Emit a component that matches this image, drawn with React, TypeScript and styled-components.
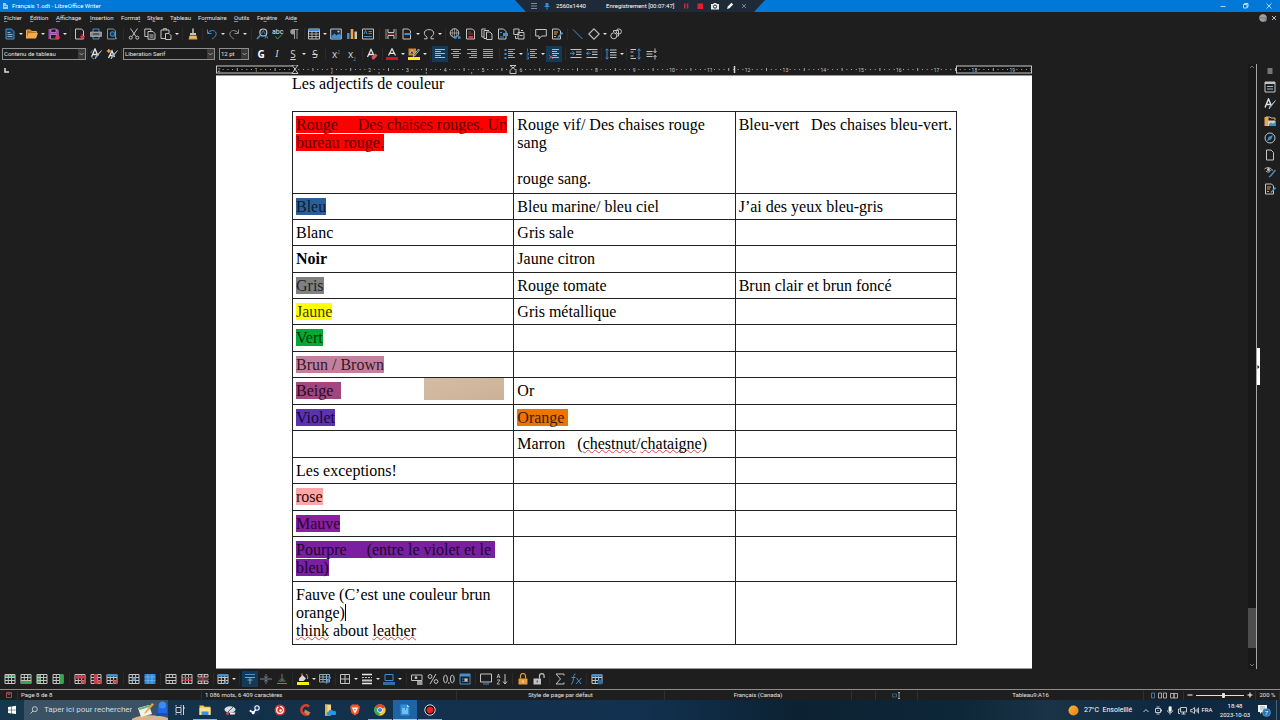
import React from "react";
import styled, { createGlobalStyle, css } from "styled-components";

const GlobalStyle = createGlobalStyle`
  *, *::before, *::after { box-sizing: border-box; }
  body { margin: 0; background: #1e1e1e; }
  button, select, input { font: inherit; color: inherit; margin: 0; }
`;

const UI = `Roboto, "Open Sans", sans-serif`;
const G = "#c4c4c4";
const B = "#3f8fd2";
const O = "#eaa455";
const R = "#cc3f4a";
const N = "#35a552";

/* ---------- icons (12 x 12 grid) ---------- */

const grid = (
  <path d="M1 1.5h10v9H1zM1 4.5h10M1 7.5h10M4.3 1.5v9M7.6 1.5v9" stroke={G} fill="none" />
);
const page = <path d="M2.5 1h4.5l2.5 2.5v7.5h-7z" stroke={G} fill="none" />;
const lines = (x1: number[], x2: number[], c = G) => (
  <path d={x1.map((x, i) => `M${x} ${1.5 + i * 2}H${x2[i]}`).join("")} stroke={c} fill="none" />
);
const pen = <path d="M11.500 2.500L7 8.500L5 11L6 8Z" fill={B} stroke={G} strokeWidth=".7" />;

const icons: Record<string, React.ReactNode> = {
  newDoc: <><path d="M2 1h5.5l2.5 2.5v7.5H2z" fill="#17405f" stroke={B} /><path d="M3.5 4.5h3M3.5 6.5h5M3.5 8.5h5" stroke={G} strokeWidth=".8" /></>,
  open: <><path d="M.5 10.500V2h4l1 1.500h5v2" fill="#b87522" stroke={O} /><path d="M.5 10.500L2.500 5h9.500l-2 5.500z" fill="#f5a94e" /></>,
  save: <><path d="M.5 1h9l1.500 1.500v8.500H.5z" fill="#a344b3" /><path d="M3 1h5v3.500H3zM2.500 6.500h6V11h-6z" fill="#1e1e1e" stroke="#d9a5e2" strokeWidth=".6" /><circle cx="9.500" cy="9.500" r="2.300" fill="#e8354a" /></>,
  pdf: <><path d="M1.500 1h6l2 2v8h-8z" fill="none" stroke={G} /><path d="M8 6v3M6.500 8.500L8.500 11l2-2.500z" fill={R} stroke={R} /></>,
  print: <><path d="M3 4V1h6v3M3 8v3h6V8" fill="none" stroke={B} /><path d="M.5 4h11v4.500h-11z" fill="#8b8b8b" stroke={G} strokeWidth=".6" /><path d="M3 6h6" stroke="#222" /></>,
  preview: <><path d="M1.500 1h6l2 2v8h-8z" fill="none" stroke="#7e95a6" /><circle cx="6.500" cy="6" r="2.300" fill="#17405f" stroke={B} /><path d="M8.500 8l2.500 3" stroke={B} /></>,
  cut: <><path d="M2.500 .5L8 8.500M9.500 .5L4 8.500" stroke={G} fill="none" /><circle cx="2.700" cy="9.700" r="1.500" stroke={G} fill="none" /><circle cx="9.300" cy="9.700" r="1.500" stroke={G} fill="none" /></>,
  copy: <path d="M4 8.500H.8V1h6v2M4 3.500h5l2 2v5.700H4zM5.500 7h4M5.500 9h4" stroke={G} fill="none" />,
  paste: <><path d="M5 10.500H1V2h8v3M3.500 2V.7h3V2" stroke={G} fill="none" /><path d="M5.500 5.500h3.500l2 2v4H5.500z" stroke={G} fill="none" /></>,
  brush: <><path d="M6 .5v4.500" stroke={G} strokeWidth="1.500" /><path d="M3 5h6v2H3z" fill={G} /><path d="M2.500 7.500h7l1 4h-9z" fill="#dba63f" /><path d="M3 9h6" stroke="#fff" strokeWidth=".5" /></>,
  undo: <path d="M1.500 1.500v4h4M2 5C4 2 9 1.500 10 5c.7 2.500-1.500 4.500-4 6" stroke={B} fill="none" />,
  redo: <path d="M10.500 1.500v4h-4M10 5C8 2 3 1.500 2 5c-.7 2.500 1.500 4.500 4 6" stroke="#8a8a8a" fill="none" />,
  find: <><circle cx="7.300" cy="4.500" r="3.500" stroke={G} fill="none" strokeWidth="1.200" /><path d="M4.500 7L1 11" stroke={B} strokeWidth="1.600" /><path d="M9 10.500L10.300 7l1.300 3.500" stroke={B} fill="none" /><path d="M5.500 6l1.800-3.500L9 6" stroke={B} fill="none" strokeWidth=".8" /></>,
  spell: <><text x="0" y="6" fontSize="7" fill="#e4e4e4" fontFamily="Roboto">abc</text><path d="M3.500 8.500l2 2.500 4.500-4.500" stroke={N} fill="none" /></>,
  pilcrow: <><path d="M6.500 1H5a2.700 2.700 0 0 0 0 5.500h1.500z" fill="#9a9a9a" /><path d="M6.500 11V1.500M9 11V1.500M5 1.500h5.500" stroke="#9a9a9a" fill="none" /></>,
  table: <><path d="M.5 1h11v10H.5z" fill="none" stroke={G} /><path d="M.5 1h11v2.500H.5z" fill={B} /><path d="M.5 3.500h11M.5 6h11M.5 8.500h11M4 3.500V11M8 3.500V11" stroke={G} strokeWidth=".8" /></>,
  image: <><path d="M.7 1h10.600v10H.7z" fill="#1d2b38" stroke={G} /><path d="M1.500 10.500V8l3-2.500 2 2L9 5.500l2 2v3z" fill={B} /><circle cx="8.500" cy="3.500" r="1.100" fill={G} /></>,
  chart: <><path d="M1 5h2.500v6H1z" fill={B} /><path d="M4.700 1h2.600v10H4.700z" fill={O} /><path d="M8.500 3.500H11V11H8.500z" fill="#d7c7a3" /></>,
  textbox: <><path d="M.5 1h11v10H.5z" fill="none" stroke={G} /><path d="M2 6L3.500 2.500 5 6M6.500 3.500h3.500M6.500 5.500h3.500M2 8.500h8" stroke={B} fill="none" /></>,
  pageBreak: <><path d="M3 1v3.500h6V1M3 11V7.500h6V11" stroke={G} fill="none" /><path d="M1 1v10M11 1v10" stroke={G} strokeWidth=".7" /><path d="M0 6h12" stroke={R} strokeWidth=".8" /></>,
  field: <><path d="M2 1h5.500l2 2v8H2z" fill="none" stroke={G} /><path d="M3.500 6h6.500" stroke={B} strokeWidth="2" /></>,
  omega: <path d="M1 10.800h3V9C1.500 7.500 1 5.500 1.500 4 2.500.8 9.500.8 10.500 4c.5 1.500 0 3.500-2.500 5v1.800h3" stroke={G} fill="none" />,
  link: <><circle cx="5.500" cy="5" r="4.300" stroke={G} fill="none" /><path d="M1.200 5h8.600M5.500.7v8.600M3.300 1.500v7M7.700 1.500v7" stroke={G} strokeWidth=".6" /><path d="M5 9.500h2.500M9 9.500h2.500" stroke={B} strokeWidth="2.400" /></>,
  footnote: <><path d="M1.500 1h6l2 2v8h-8z" fill="none" stroke={G} /><path d="M3.500 8h4.500v2.500H3.500z" fill={R} /><path d="M3 4h3M3 6h5" stroke={R} strokeWidth=".7" /></>,
  endnote: <path d="M3 9H.8V1h4M5 10.500H3V2.500h5M5.500 4h3.500l2 2v5.500H5.500z" stroke={G} fill="none" />,
  bookmark: <><path d="M1.500 1h5l2.500 2.500V11h-7.500z" fill="none" stroke={G} /><path d="M6 5h5v3H6z" fill={B} /><path d="M3 4.500h2M3 9h4" stroke={B} /></>,
  crossRef: <path d="M.8 1H6v5.500H.8zM5 4.500h6v6.500H5zM2.500 8v2.500h2M6.500 7.500h3M8 2.500h2" stroke={G} fill="none" />,
  comment: <path d="M.7 1.500h10.600v6.500H6.500L4 11V8H.7z" stroke={G} fill="none" />,
  track: <><path d="M1.500 1h6l2 2v8h-8z" fill="none" stroke={G} /><path d="M3 4h4M3 6h3M3 8.500h2" stroke={O} /><path d="M11.500 4.500L7 9.500" stroke={B} strokeWidth="1.700" /></>,
  line: <path d="M1 1.500l9.500 9.500" stroke={B} />,
  diamond: <path d="M6 .8L11.200 6 6 11.200.8 6z" stroke={G} fill="none" strokeWidth="1.100" />,
  shapes: <><circle cx="3.800" cy="7.800" r="3" stroke={G} fill="none" /><path d="M3.500 4V2.500h5V8H7" stroke={G} fill="none" /><circle cx="8.800" cy="3.500" r="2.600" stroke={G} fill="none" /></>,
  styleEdit: <><path d="M1.500 9L5 1l3 7M2.800 6.500h4" stroke="#e2e2e2" strokeWidth="1.400" fill="none" />{pen}<path d="M.8 5a4 4 0 0 1 2-3M1 8a4 4 0 0 0 3 3" stroke={B} fill="none" /></>,
  styles: <><path d="M1 9.500L4.500 1l3 7M2.300 6.500h4" stroke="#e2e2e2" strokeWidth="1.400" fill="none" />{pen}</>,
  styleNew: <><path d="M2.500 10L6 3l2.500 6M3.800 7.500h4" stroke="#e2e2e2" strokeWidth="1.400" fill="none" />{pen}<path d="M.8 3h4M2.800 1v4" stroke={O} strokeWidth="1.300" /></>,
  clear: <><path d="M1.500 9L5 1.500l3 6M2.800 6.500h4" stroke="#e2e2e2" strokeWidth="1.300" fill="none" /><path d="M5.500 9l4-3.500 2 2-3.500 4h-1.500z" fill="#df5761" /></>,
  fontColor: <><path d="M2.500 7.500L6 .8l3.500 6.700M3.800 5.300h4.400" stroke="#e8e8e8" strokeWidth="1.200" fill="none" /><path d="M0 9h12v3H0z" fill="#d3141e" /></>,
  highlight: <><path d="M.5.500h7.500v7H.5z" fill="#cf8a2c" /><path d="M2 5.500L4 2l2 3.500M10.500 1L6 6.500l-1 2 2-1L11.500 2z" fill="#3a3a3a" stroke="#ddd" strokeWidth=".7" /><path d="M0 9h12v3H0z" fill="#ffef00" /></>,
  alignLeft: lines([1, 1, 1, 1, 1], [11, 7, 11, 7, 11], "#9bc0dc"),
  alignCenter: lines([1, 3, 1, 3, 3], [11, 9, 11, 9, 9], "#a4a4a4"),
  alignRight: lines([1, 5, 1, 5, 3], [11, 11, 11, 11, 11], "#a4a4a4"),
  justify: lines([1, 1, 1, 1, 1], [11, 11, 11, 11, 11], "#a4a4a4"),
  bullets: <>{lines([4, 4, 4, 4, 4], [11, 9, 11, 9, 11], "#a4a4a4")}<path d="M.5 1h2v2h-2zM.5 5h2v2h-2zM.5 9h2v2h-2z" fill={B} /></>,
  numbers: <>{lines([4, 4, 4, 4, 4], [11, 9, 11, 9, 11], "#a4a4a4")}<path d="M1.500 .5v3M.5 5h2v2h-2M.5 9h2v2h-2" stroke={B} fill="none" strokeWidth=".8" /></>,
  noList: <>{lines([4, 4, 4, 4, 4], [11, 9, 11, 9, 11], "#9bc0dc")}<path d="M1 7l4 4M5 7l-4 4" stroke={R} /></>,
  indent: <><path d="M.5 1.500h11M6 4h5.500M6 6.500h5.500M.5 9.500h11" stroke={G} /><path d="M0 5.300h4M2.500 3.500l2 1.800-2 1.800" stroke={B} fill="none" /></>,
  outdent: <><path d="M.5 1.500h11M6 4h5.500M6 6.500h5.500M.5 9.500h11" stroke={G} /><path d="M.5 5.300h4M2.500 3.500l-2 1.800 2 1.800" stroke={B} fill="none" /></>,
  lineSpacing: <><path d="M5 2h6.500M5 4.500h6.500M5 7h6.500M5 9.500h6.500" stroke={G} /><path d="M2 1v10M.5 2.500L2 .8l1.500 1.700M.5 9.500L2 11.200l1.500-1.700" stroke={B} fill="none" /></>,
  paraUp: <><path d="M.5 1.500h5.500M.5 10.500h5.500M.5 4h3M.5 8h3" stroke={G} /><path d="M9 1v10M7.500 2.500L9 .8l1.500 1.700M7.500 9.500L9 11.200l1.500-1.700" stroke={B} fill="none" /></>,
  paraDown: <><path d="M.5 3.500h6M.5 6h6M.5 8.500h6" stroke={G} /><path d="M9 .5v4M7.500 3l1.500 1.700L10.500 3M9 11.500v-4M7.500 9L9 7.300 10.500 9" stroke={G} fill="none" /></>,
  rowAbove: <><path d="M1 1h10v3H1z" fill={N} />{grid}</>,
  rowBelow: <>{grid}<path d="M1 8h10v3H1z" fill={N} /><path d="M9 2v4" stroke={N} /></>,
  colBefore: <><path d="M1 1h3.300v10H1z" fill={N} />{grid}</>,
  colAfter: <>{grid}<path d="M7.700 1H11v10H7.700z" fill={N} /></>,
  delRow: <>{grid}<path d="M1 2.500h10v3H1z" fill={R} /><path d="M7 7l4 4M11 7l-4 4" stroke={R} strokeWidth="1.300" /></>,
  delCol: <>{grid}<path d="M4 1h3.500v10H4z" fill={R} /><path d="M7 7l4 4M11 7l-4 4" stroke={R} strokeWidth="1.300" /></>,
  delTable: <>{grid}<path d="M1 1h10v2.500H1z" fill={B} /><path d="M7 7l4 4M11 7l-4 4" stroke={R} strokeWidth="1.300" /></>,
  selCell: <>{grid}<path d="M4.300 4.500h3.300v3H4.300z" fill={B} /></>,
  selTable: <><path d="M.5 1h11v10H.5z" fill="#2f8ade" /><path d="M.5 4h11M.5 7.500h11M4 1v10M8 1v10" stroke="#7dbcf0" strokeWidth=".6" /></>,
  merge: <path d="M1 1.500h10v9H1zM1 4.500h10M1 7.500h10M4.300 1.500v3M7.600 1.500v3M4.300 7.500v3M7.600 7.500v3" stroke={G} fill="none" />,
  split: <>{grid}<path d="M2 4.500h8v3H2zM6 4.500v3" stroke={R} fill="none" /></>,
  splitTable: <><path d="M1 1.500h10v2.500H1zM1 8h10v2.500H1zM4.300 1.500V4M7.600 1.500V4M4.300 8v2.500M7.600 8v2.500" stroke={G} fill="none" /><path d="M0 6h12M6 1v10" stroke={R} /></>,
  optimize: <>{grid}<path d="M1 1h10v2.500H1z" fill={B} /><path d="M8.500 5v6M6.500 9l2 2 2-2" stroke={B} fill="none" /></>,
  vTop: <><path d="M1 1.500h10" stroke={B} /><path d="M1 4.500h10M3.500 7h5M6 5v6" stroke="#86a4b8" /></>,
  vMid: <><path d="M0 6h12" stroke="#6b8ba0" /><path d="M4 3.500l2 1.500 2-1.500M4 8.500L6 7l2 1.500M6 1v3.500M6 7.500V11" stroke="#8a8a8a" strokeWidth=".8" fill="none" /></>,
  vBot: <><path d="M1 10.500h10" stroke={N} /><path d="M2.500 8h7M4 5.500l2 2 2-2M6 1v6" stroke="#8a8a8a" strokeWidth=".8" fill="none" /></>,
  bucket: <><path d="M2 5.500L5.500 2l3.500 3.500L6.500 8H2z" fill="#d8d8d8" /><path d="M5 .5v3M9.500 1c1 2 1.500 3 1 5" stroke={O} fill="none" /><path d="M0 9h12v3H0z" fill="#ffef00" /></>,
  autoFormat: <><path d="M.5 1.500h10v7.500H.5zM.5 4h10M.5 6.500h10M4 1.500V9M7.500 1.500V9" stroke="#8ba9bd" fill="none" /><path d="M11.500 4L7 10.500" stroke={B} strokeWidth="1.700" /></>,
  borders: <path d="M1.500 1.500h9v9h-9zM1.500 6h9M6 1.500v9" stroke={G} fill="none" />,
  borderStyle: <><path d="M1 1.500h10M1 10.500h10" stroke="#e8e8e8" strokeWidth="1.500" /><path d="M1 4.500h10" stroke={G} strokeWidth="1" strokeDasharray="2 1" /><path d="M1 7.500h10" stroke={G} strokeWidth="2" /></>,
  borderColor: <><path d="M2 1.500h8v6H2z" stroke={B} fill="none" /><path d="M0 9h12v3H0z" fill="#2f6ea9" /></>,
  currency: <><path d="M.5 2h10.500v5.500H.5z" stroke={G} fill="none" /><circle cx="5" cy="4.700" r="1.400" fill={G} /><path d="M6 9h5.500M6 11h5.500" stroke={G} strokeWidth="1.400" /></>,
  percent: <><circle cx="3" cy="3.500" r="1.900" stroke={G} fill="none" /><circle cx="9" cy="8.500" r="1.900" stroke={G} fill="none" /><path d="M9 1L3 11" stroke={G} /></>,
  decimal: <><ellipse cx="2.500" cy="6" rx="1.900" ry="3.800" stroke={G} fill="none" /><ellipse cx="9.300" cy="6" rx="1.900" ry="3.800" stroke={G} fill="none" /><path d="M5.900 9v2" stroke={G} /></>,
  date: <><path d="M1 1h10v10H1z" stroke={B} fill="none" /><path d="M1 1h10v2.500H1z" fill={B} /><path d="M3 6h6M3 8.500h6" stroke={B} strokeDasharray="1.500 .8" /><path d="M5.500 5.500h3v3h-3z" fill={G} /></>,
  caption: <><path d="M.5 1h11v8H.5z" stroke={G} fill="none" /><path d="M3 11h6" stroke={B} /></>,
  sort: <><path d="M1 5l1.500-4L4 5M1.500 3.800h2M1 7h3L1 11h3" stroke={G} fill="none" strokeWidth=".8" /><path d="M9 1v10M7 8.500L9 11l2-2.500" stroke={G} fill="none" /></>,
  lock: <><path d="M1.500 5.500h9v6h-9z" fill="#e79a3c" /><path d="M3.500 5.500V3a2.500 2.500 0 0 1 5 0v2.500" stroke="#e79a3c" fill="none" strokeWidth="1.200" /><path d="M6 7.500v2" stroke="#fff" /></>,
  unlock: <><path d="M.5 5.500h7.500v6H.5z" fill={G} /><path d="M6.500 5.500V3a2.300 2.300 0 0 1 4.600 0v2" stroke={G} fill="none" strokeWidth="1.200" /><path d="M4.200 7.500v2" stroke="#333" /></>,
  sum: <path d="M10 2.500V1H2l4.500 5L2 11h8V9.500" stroke={G} fill="none" />,
  fx: <path d="M5.500 1C3.500.7 4 3 3.500 5.500S2.800 11 1 11M1.500 4.500h4M6.500 5l4.500 6M11.500 5L6 11" stroke={B} fill="none" />,
  tableProps: <>{grid}<path d="M1 1h10v2.500H1z" fill={B} /><circle cx="9" cy="9" r="2.500" fill="#2b6fa8" /></>,
  hamburger: <path d="M3.500 4h5M3.500 6h5M3.500 8h5" stroke="#cfcfcf" />,
  properties: <><path d="M1 1h10v10H1z" stroke={G} fill="none" /><path d="M1 1h10v2H1z" fill={G} /><path d="M3 5.500h6M3 8h6" stroke="#9fbace" /></>,
  gallery: <><path d="M.5 2h4v9h-4z" fill={O} /><path d="M2 2h4l1 1h4v2" stroke="#e7b36f" fill="none" /><path d="M4 5.500h7.500V11H4z" fill="#d9d3c4" /><path d="M5 11V9l2-1.500 2 1L11.500 7v4z" fill={B} /></>,
  compass: <><circle cx="6" cy="6" r="5" stroke={G} fill="none" /><path d="M9 3L7.300 7.300 3 9l1.700-4.300z" fill={B} /></>,
  page,
  inspector: <><path d="M.5 3c3-2.500 7-1 8 1.500M2 5c2 2 4 1 5-1" stroke={G} fill="none" /><circle cx="4.500" cy="3.500" r="1.500" fill={G} /><path d="M11.500 4L7 9.500 5 11" stroke={B} fill="none" strokeWidth="1.500" /></>,
};

const Svg = ({ name, size = 12 }: { name: string; size?: number }) => (
  <svg width={size} height={size} viewBox="0 0 12 12" aria-hidden="true">{icons[name]}</svg>
);

/* ---------- shell ---------- */

const Shell = styled.div`
  display: flex;
  flex-direction: column;
  min-height: 100vh;
  background: #1e1e1e;
  color: #e4e4e4;
  font: 6px/8px ${UI};
`;

const TitleBar = styled.header`
  position: relative;
  display: flex;
  align-items: center;
  justify-content: space-between;
  height: 12px;
  padding-left: 2px;
  background: #0078d7;
  color: #fff;
`;

const Title = styled.div`
  display: flex;
  align-items: center;
  gap: 3px;
  white-space: nowrap;
`;

const WindowControls = styled.div`
  display: flex;
`;

const BareButton = styled.button`
  display: flex;
  align-items: center;
  justify-content: center;
  padding: 0;
  border: 0;
  background: none;
`;

const WindowButton = styled(BareButton)`
  width: 23px;
  height: 11px;
`;

const Recorder = styled.div`
  position: absolute;
  top: 0;
  left: 50%;
  transform: translateX(-50%);
  display: flex;
  align-items: center;
  gap: 6px;
  width: 250px;
  height: 12px;
  padding-left: 15px;
  background: #1f2a38;
  clip-path: polygon(0 0, 100% 0, calc(100% - 11px) 100%, 11px 100%);
`;

const RecText = styled.span<{ $w: number }>`
  width: ${(p) => p.$w}px;
  white-space: nowrap;
`;

const MenuBar = styled.nav`
  display: flex;
  align-items: center;
  height: 12px;
  padding-left: 4px;
`;

const MenuItem = styled.button<{ $w: number }>`
  width: ${(p) => p.$w}px;
  padding: 0;
  border: 0;
  background: none;
  text-align: left;
  white-space: nowrap;
  u { text-underline-offset: 1px; text-decoration-thickness: 1px; text-decoration-color: #8a8a8a; }
`;

const MenuEnd = styled.div`
  display: flex;
  gap: 4px;
  margin-left: auto;
  padding-right: 3px;
`;

const ToolRow = styled.div`
  display: flex;
  align-items: center;
  height: 20px;
  padding-left: 2px;
`;

const Tool = styled(BareButton)<{ $on?: boolean }>`
  width: 16px;
  height: 16px;
  ${(p) => p.$on && css`background: #143a58;`}
`;

const GlyphTool = styled(Tool)<{ $kind?: "bold" | "italic" | "under" | "strike" }>`
  font-family: "Open Sans", sans-serif;
  font-size: 10px;
  line-height: 12px;
  color: #d4d4d4;
  ${(p) => p.$kind === "bold" && css`font-weight: 700; color: #fff;`}
  ${(p) => p.$kind === "italic" && css`font-style: italic; font-family: "Liberation Serif", serif;`}
  ${(p) => p.$kind === "under" && css`text-decoration: underline;`}
  ${(p) => p.$kind === "strike" && css`text-decoration: line-through;`}
  sup, sub { font-size: 5px; line-height: 0; color: ${B}; }
`;

const CaretButton = styled(BareButton)`
  width: 6px;
  height: 16px;
  &::after {
    content: "";
    border: 2px solid transparent;
    border-top-color: #e4e4e4;
    border-bottom: 0;
  }
`;

const Gap = styled.span<{ $w: number }>`
  display: flex;
  justify-content: center;
  width: ${(p) => p.$w}px;
  height: 12px;
  &::after { content: ""; width: 1px; background: #2a2a2a; }
`;

const ComboBox = styled.label<{ $w: number }>`
  position: relative;
  display: flex;
  width: ${(p) => p.$w}px;
  height: 12px;
  select {
    appearance: none;
    width: 100%;
    padding: 0 10px 0 1px;
    border: 1px solid #8f8f8f;
    border-radius: 0;
    background: #1c1c1c;
  }
  svg {
    position: absolute;
    top: 1px;
    right: 1px;
    background: #3a3a3a;
    pointer-events: none;
  }
`;

const Combo = ({ w, value, label }: { w: number; value: string; label: string }) => (
  <ComboBox $w={w}>
    <select aria-label={label} defaultValue={value}><option>{value}</option></select>
    <svg width="7" height="10" viewBox="0 0 7 10" aria-hidden="true">
      <path d="M1.500 4l2 2 2-2" stroke="#b5b5b5" fill="none" strokeWidth=".8" />
    </svg>
  </ComboBox>
);

/* A tool list: names are icons, "v" is a drop-down caret, numbers are separators, "*" marks a pressed button. */
const Tools = ({ items }: { items: (string | number)[] }) => (
  <>
    {items.map((it, i) => {
      if (typeof it === "number") return <Gap key={i} $w={it} />;
      if (it === "v") return <CaretButton key={i} aria-label="Plus d'options" />;
      const on = it.endsWith("*");
      const name = on ? it.slice(0, -1) : it;
      return <Tool key={i} $on={on} aria-label={name}><Svg name={name} /></Tool>;
    })}
  </>
);

/* ---------- workspace ---------- */

const Workspace = styled.main`
  display: flex;
  flex: 1;
`;

const Canvas = styled.div`
  position: relative;
  display: flex;
  flex-direction: column;
  align-items: center;
  flex: 1;
  min-width: 0;
`;

const TabCorner = styled.svg`
  position: absolute;
  top: 4px;
  left: 4px;
`;

const RulerSvg = styled.svg`
  display: block;
  margin: 1px 0;
`;

const Sheet = styled.article`
  flex: 1;
  width: 816px;
  padding: 0 75px 23px 76px;
  border-top: 1px solid #9a9a9a;
  border-bottom: 1px solid #9a9a9a;
  background: #fff;
  color: #000;
  font: 16px/18px "Liberation Serif", serif;
`;

const Heading = styled.p`
  margin: 0 0 20px;
  line-height: 15px;
`;

const DocTable = styled.table`
  width: 665px;
  border-collapse: collapse;
  table-layout: fixed;
`;

const Row = styled.tr<{ $h: number }>`
  height: ${(p) => p.$h}px;
`;

const Cell = styled.td`
  position: relative;
  padding: 4px 0 3px 3px;
  border: 1px solid #222;
  vertical-align: top;
  white-space: pre;
`;

const Mark = styled.span<{ $bg: string; $fg?: string }>`
  background: ${(p) => p.$bg};
  color: ${(p) => p.$fg ?? "#111"};
`;

const Misspelt = styled.span`
  text-decoration: underline wavy #e0473f 1px;
  text-underline-offset: 0;
  text-decoration-skip-ink: none;
`;

const TextCursor = styled.span`
  border-right: 1px solid #000;
`;

const Swatch = styled.div`
  position: absolute;
  top: 0;
  right: 9px;
  width: 80px;
  height: 22px;
  background: linear-gradient(165deg, #d4bda5, #cbb196);
`;

const Scrollbar = styled.div`
  display: flex;
  flex-direction: column;
  align-items: center;
  justify-content: space-between;
  width: 8px;
  background: #181818;
`;

const Thumb = styled.div`
  width: 8px;
  height: 40px;
  margin: auto 0 13px;
  background: #4d4d4d;
`;

const Splitter = styled.div`
  display: flex;
  align-items: center;
  width: 4px;
  border-left: 1px solid #a6a6a6;
`;

const SplitHandle = styled(BareButton)`
  width: 3px;
  height: 37px;
  background: #fff;
`;

const SideBar = styled.aside`
  display: flex;
  flex-direction: column;
  align-items: center;
  width: 20px;
`;

const SideButton = styled(BareButton)<{ $h: number }>`
  width: 16px;
  height: ${(p) => p.$h}px;
`;

const CM = 37.8;
const Ruler = () => {
  const zero = 78;
  const marks = Array.from({ length: 22 }, (_, i) => i - 2);
  return (
    <RulerSvg width="816" height="9" viewBox="0 0 816 9" aria-label="Règle">
      <rect x=".5" y="1" width="78" height="7" fill="#141414" stroke="#c9c9c9" />
      <rect x="740.500" y="1" width="75" height="7" fill="#141414" stroke="#c9c9c9" />
      {marks.map((n) => {
        const x = zero + n * CM;
        return (
          <g key={n}>
            {n !== 0 && (
              <text x={Math.max(x, 3)} y="6.500" fontSize="5" fill="#c9c9c9" textAnchor="middle" fontFamily="Roboto">{Math.abs(n)}</text>
            )}
            {[1, 2, 3, 4, 5, 6, 7].map((k) => (
              <rect key={k} x={x + (k * CM) / 8 - 0.500} y={k === 4 ? 3 : 4} width="1" height={k === 4 ? 3 : 1} fill="#a8a8a8" />
            ))}
          </g>
        );
      })}
      {[1, 2.250, 3.500, 4.700].map((n) => <path key={n} d={`M${zero + n * CM} 7v2`} stroke="#8a8a8a" />)}
      <path d="M76 0h6L76 8.500h6L76 0" stroke="#d5d5d5" fill="#1e1e1e" strokeWidth=".9" />
      <path d="M294 8.500v-3l3-3 3 3v3zM294 .5h6l-3 2.500z" stroke="#d5d5d5" fill="#1e1e1e" strokeWidth=".9" />
      <path d="M518.500 1v7" stroke="#d5d5d5" strokeWidth="1.500" />
    </RulerSvg>
  );
};

/* ---------- document ---------- */

type RowData = { h: number; cells: [React.ReactNode?, React.ReactNode?, React.ReactNode?] };

const rows: RowData[] = [
  { h: 82, cells: [
    <Mark $bg="#ff0000" $fg="#5a0000">{"Rouge     Des chaises rouges. Un\nbureau rouge."}</Mark>,
    "Rouge vif/ Des chaises rouge\nsang\n\nrouge sang.",
    "Bleu-vert   Des chaises bleu-vert.",
  ] },
  { h: 26, cells: [<Mark $bg="#2a6099" $fg="#0c1c30">Bleu</Mark>, "Bleu marine/ bleu ciel", "J’ai des yeux bleu-gris"] },
  { h: 26, cells: ["Blanc", "Gris sale"] },
  { h: 27, cells: [<b>Noir</b>, "Jaune citron"] },
  { h: 26, cells: [<Mark $bg="#808080" $fg="#222">Gris</Mark>, "Rouge tomate", "Brun clair et brun foncé"] },
  { h: 26, cells: [<Mark $bg="#ffff00" $fg="#3a3a00">Jaune</Mark>, "Gris métallique"] },
  { h: 27, cells: [<Mark $bg="#00a933" $fg="#00300c">Vert</Mark>] },
  { h: 26, cells: [<Mark $bg="#bf819e" $fg="#3a1626">Brun / Brown</Mark>] },
  { h: 27, cells: [<><Mark $bg="#a1467e" $fg="#2c0c20">{"Beige  "}</Mark><Swatch /></>, "Or"] },
  { h: 26, cells: [<Mark $bg="#5b32b0" $fg="#160a38">Violet</Mark>, <Mark $bg="#ea7500" $fg="#3c1c00">{"Orange "}</Mark>] },
  { h: 27, cells: [undefined, <>{"Marron   ("}<Misspelt>chestnut</Misspelt>/<Misspelt>chataigne</Misspelt>)</>] },
  { h: 26, cells: ["Les exceptions!"] },
  { h: 27, cells: [<Mark $bg="#ffa6a6" $fg="#2a0c0c">rose</Mark>] },
  { h: 26, cells: [<Mark $bg="#8a1fa5" $fg="#26062e">Mauve</Mark>] },
  { h: 45, cells: [<Mark $bg="#7b1fa2" $fg="#22062e">{"Pourpre     (entre le violet et le \nbleu)"}</Mark>] },
  { h: 63, cells: [<>{"Fauve (C’est une couleur brun\norange)"}<TextCursor />{"\n"}<Misspelt>think</Misspelt> about <Misspelt>leather</Misspelt></>] },
];

/* ---------- status bar ---------- */

const StatusBar = styled.footer`
  display: grid;
  grid-template-columns: 18px 184fr 255fr 208fr 187fr 24fr 42fr 226fr 40px 72px 24px;
  align-items: center;
  height: 11px;
  border-top: 1px solid #8d8d8d;
`;

const StatusCell = styled.div<{ $left?: boolean }>`
  display: flex;
  align-items: center;
  justify-content: ${(p) => (p.$left ? "flex-start" : "center")};
  height: 9px;
  padding-left: ${(p) => (p.$left ? 3 : 0)}px;
  border-right: 1px solid #303030;
  white-space: nowrap;
`;

const ZoomSlider = styled.input`
  appearance: none;
  width: 48px;
  height: 8px;
  margin: 0 3px;
  background: linear-gradient(#e0e0e0, #e0e0e0) center / 100% 1px no-repeat;
  &::-webkit-slider-thumb {
    appearance: none;
    width: 3px;
    height: 5px;
    border-radius: 1px;
    background: #e4e4e4;
  }
`;

/* ---------- taskbar ---------- */

const TaskBar = styled.footer`
  display: flex;
  align-items: stretch;
  height: 20px;
  background: linear-gradient(90deg, #16384f, #143049 20%, #123150 50%, #0c2233 62%, #0d2638 75%, #1a3346 82%, #0d2740 92%, #102b42);
  color: #fff;
`;

const StartButton = styled(BareButton)`
  width: 24px;
`;

const Search = styled.label`
  display: flex;
  align-items: center;
  gap: 6px;
  width: 144px;
  padding-left: 6px;
  overflow: hidden;
  background: #3a5263;
  input {
    flex: 1;
    min-width: 0;
    padding: 0;
    border: 0;
    outline: 0;
    background: none;
    font-size: 8px;
    line-height: 12px;
  }
  input::placeholder { color: #d3dae0; opacity: 1; }
  svg { flex: none; }
  svg:last-child { margin-left: -6px; }
`;

const TaskButton = styled(BareButton)<{ $open?: boolean; $active?: boolean }>`
  width: 24px;
  margin-right: 1px;
  ${(p) => p.$open && css`box-shadow: inset 0 -1px #78b8e8;`}
  ${(p) => p.$active && css`background: #1f63a5; box-shadow: inset 0 -1px #9ad0f8;`}
`;

const Apps = styled.div`
  display: flex;
`;

const Tray = styled.div`
  display: flex;
  align-items: center;
  margin-left: auto;
  white-space: nowrap;
`;

const Weather = styled.div`
  display: flex;
  align-items: center;
  gap: 5px;
  width: 72px;
  font-size: 7px;
`;

const TrayIcon = styled(BareButton)`
  width: 12px;
  height: 16px;
`;

const Clock = styled.time`
  width: 42px;
  line-height: 9px;
  text-align: center;
`;

const Lang = styled.span`
  width: 14px;
  text-align: center;
`;

const Notify = styled(BareButton)`
  width: 16px;
  margin-right: 4px;
`;

const DesktopEdge = styled.span`
  align-self: stretch;
  width: 4px;
  border-left: 1px solid #48606f;
`;

const menus: [string, string, string, number][] = [
  ["", "F", "ichier", 26], ["", "É", "dition", 26], ["", "A", "ffichage", 34], ["", "I", "nsertion", 31],
  ["Forma", "t", "", 26], ["St", "y", "les", 23], ["T", "a", "bleau", 28], ["Fo", "r", "mulaire", 36],
  ["", "O", "utils", 23], ["Fe", "n", "être", 28], ["Aid", "e", "", 20],
];

const trayIcons: [string, React.ReactNode][] = [
  ["Afficher les icônes cachées", <path d="M1.500 6l2.500-2.500L6.500 6" />],
  ["Caméra", <path d="M1.500 2.500h5v4h-5zM2.500 1h3M2.500 8h3M7.500 3.500v2M3.500 4.500h1" />],
  ["Microphone", <><path d="M3 .8h2.200v4.500H3z" fill="#fff" /><path d="M1.500 4.500c0 3 5.200 3 5.200 0M4 7v1.500" /></>],
  ["Réseau", <path d="M2.500 1.500h6v4.500h-6zM5.500 6v2M3.500 8h4M.5 3h2M.5 3v4.500h1.500" />],
  ["Volume", <path d="M.7 3.500h1.500L4.500 1.500v6L2.200 5.800H.7zM5.800 3.500v2M7.200 2.500v4M8.500 1.500v6" />],
];

const appIcons: { name: string; open?: boolean; active?: boolean; art: React.ReactNode }[] = [
  { name: "Vue des tâches", art: <path d="M2 3.500h5v5H2zM2 1v1.500M7 1v1.500M2 9.500V11M7 9.500V11M9.500 1v10M9 4h2" stroke="#e6e6e6" fill="none" strokeWidth=".9" /> },
  { name: "Explorateur", open: true, art: <><path d="M.5 1.500h4l1 1.200h6v8.300H.5z" fill="#f6c94f" /><path d="M.5 4h11v7H.5z" fill="#ffe08a" /><path d="M2.500 7.500h7V11h-7z" fill="#3d8fd8" /></> },
  { name: "Capture", art: <><ellipse cx="6" cy="5.500" rx="5.500" ry="3.300" fill="#d4dce6" /><path d="M3 9l6-6" stroke="#7d4a56" /><circle cx="3.500" cy="9.500" r="1.500" fill="#d9404d" /><path d="M6 8.500h5.500l-1 2H6z" fill="#e9eef4" /></> },
  { name: "Steam", art: <><circle cx="6" cy="6" r="5.500" fill="#14355f" /><circle cx="8" cy="4" r="2.200" fill="#1b3f70" stroke="#fff" strokeWidth="1.100" /><path d="M.7 6.500l3.500 2L7 5.500" stroke="#fff" fill="none" strokeWidth="1.600" /><circle cx="4.200" cy="8.700" r="1.500" fill="#fff" /></> },
  { name: "Lecteur", art: <><circle cx="6" cy="6" r="5.500" fill="#d8352f" /><circle cx="6" cy="6" r="3.300" fill="none" stroke="#fff" strokeWidth="1.200" /><path d="M4 1l4 6" stroke="#d8352f" strokeWidth="1.500" /><circle cx="6.500" cy="6.500" r="1.200" fill="#fff" /></> },
  { name: "CCleaner", art: <><path d="M10 2.500A4.600 4.600 0 1 0 10 9.500" stroke="#e23d2c" strokeWidth="2.600" fill="none" /><path d="M6 5.500l5.500 3-2.500 3-4-3z" fill="#c58a5a" /></> },
  { name: "Fichiers", art: <><path d="M1 .5h6v11H1z" fill="#f4d98a" /><path d="M1 .5h2.500v11H1z" fill="#d8b45a" /><path d="M3.500 11a2 2 0 0 1 1-3.500 2.500 2.500 0 0 1 4.500-.5 2 2 0 0 1 2 4z" fill="#2b93e6" /></> },
  { name: "Brave", art: <><path d="M3 .5h6l2 2.500-1.500 6L6 11.500 2.500 9 1 3z" fill="#f4552a" /><path d="M3 3.500h6L7.500 7 6 9.500 4.500 7z" fill="#fff" /><path d="M5 5h2L6 7z" fill="#f4552a" /></> },
  { name: "Chrome", open: true, art: <><circle cx="6" cy="6" r="5.700" fill="#f9c62f" /><path d="M6 6L1 3.200A5.700 5.700 0 0 1 11 3.200z" fill="#e5402f" /><path d="M6 6L1 3.200A5.700 5.700 0 0 0 5.500 11.700z" fill="#37a853" /><circle cx="6" cy="6" r="2.700" fill="#fff" /><circle cx="6" cy="6" r="2.100" fill="#3f80ea" /></> },
  { name: "LibreOffice Writer", open: true, active: true, art: <><path d="M1.500.500h6.500l2.500 2.500v8.500h-9z" fill="#2a93dc" /><path d="M8 .5V3h2.500z" fill="#bfe2fa" /><path d="M3 5h3M3 7h6M3 9h6M7 5h2" stroke="#d9effc" strokeWidth=".9" /></> },
  { name: "Enregistreur", open: true, art: <><circle cx="6" cy="6" r="5.200" fill="#101010" stroke="#f0f0f0" strokeWidth=".9" /><circle cx="6" cy="6" r="3.300" fill="#ee1c25" /></> },
];

export default function App() {
  return (
    <Shell>
      <GlobalStyle />
      <TitleBar>
        <Title>
          <svg width="7" height="8" viewBox="0 0 7 8" aria-hidden="true"><path d="M1 1h3.500L6 2.500V7H1z" fill="#9fd0f7" /><path d="M4.500 1v1.500H6M2 4.500h3" stroke="#1b6fb8" strokeWidth=".7" /></svg>
          <span>Français 1.odt - LibreOffice Writer</span>
        </Title>
        <Recorder>
          <svg width="8" height="8" viewBox="0 0 8 8" aria-hidden="true"><path d="M1 1.500h6M1 4h6M1 6.500h6" stroke="#9aa3ad" strokeWidth=".8" /></svg>
          <svg width="6" height="8" viewBox="0 0 6 8" aria-hidden="true"><path d="M1.500 1h3v3h1v1H3.500v2.500h-1V5H.5V4h1z" fill="#2e8ee0" /></svg>
          <RecText $w={44}>2560x1440</RecText>
          <RecText $w={70}>Enregistrement [00:07:47]</RecText>
          <svg width="8" height="8" viewBox="0 0 8 8" aria-label="Pause"><path d="M2 1.500h1.500v5H2zM4.800 1.500h1.500v5H4.800z" fill="#d5252f" /></svg>
          <svg width="8" height="8" viewBox="0 0 8 8" aria-label="Arrêter"><path d="M1.500 1.500h5.500v5.500H1.500z" fill="#e3202b" /></svg>
          <svg width="10" height="8" viewBox="0 0 10 8" aria-label="Capture"><path d="M1 2h2l1-1h2l1 1h2v5.500H1z" fill="#e8e8e8" /><circle cx="5" cy="4.600" r="1.600" fill="#e8e8e8" stroke="#1f2a38" /></svg>
          <svg width="8" height="8" viewBox="0 0 8 8" aria-label="Dessiner"><path d="M1 7l.8-2.500L5.500.8 7.200 2.500 3.500 6.200z" fill="#f2f2f2" /></svg>
          <svg width="8" height="8" viewBox="0 0 8 8" aria-label="Fermer"><path d="M2 2l4 4M6 2L2 6" stroke="#8f98a2" strokeWidth=".8" /></svg>
        </Recorder>
        <WindowControls>
          <WindowButton aria-label="Réduire"><svg width="8" height="8" viewBox="0 0 8 8"><path d="M1.500 4.500h5" stroke="#fff" strokeWidth=".7" /></svg></WindowButton>
          <WindowButton aria-label="Restaurer"><svg width="8" height="8" viewBox="0 0 8 8"><path d="M1.500 2.500h3.500v3.500H1.500zM2.500 2.500v-1h3.500v3.500H5" stroke="#fff" fill="none" strokeWidth=".7" /></svg></WindowButton>
          <WindowButton aria-label="Fermer"><svg width="8" height="8" viewBox="0 0 8 8"><path d="M1.500 1.500l5 5M6.500 1.500l-5 5" stroke="#fff" strokeWidth=".7" /></svg></WindowButton>
        </WindowControls>
      </TitleBar>

      <MenuBar>
        {menus.map(([a, u, b, w]) => <MenuItem key={a + u + b} $w={w}>{a}<u>{u}</u>{b}</MenuItem>)}
        <MenuEnd>
          <BareButton aria-label="Mise à jour"><svg width="8" height="8" viewBox="0 0 8 8"><circle cx="4" cy="4" r="3.700" fill="#b8b8b8" /><path d="M.5 4h7M4 .5v7M2 1v6M6 1v6" stroke="#555" strokeWidth=".5" /><path d="M6.500 4v3M5.300 6l1.200 1.500L7.700 6" stroke={B} fill="none" strokeWidth=".8" /></svg></BareButton>
          <BareButton aria-label="Fermer le document"><svg width="6" height="8" viewBox="0 0 6 8"><path d="M1 2l4 4M5 2L1 6" stroke="#e4e4e4" strokeWidth=".8" /></svg></BareButton>
        </MenuEnd>
      </MenuBar>

      <ToolRow>
        <Tools items={["newDoc", "v", "open", "v", "save", "v", 4, "pdf", "print", "preview", 6, "cut", "copy", "paste", "v", 5, "brush", 3, "undo", "v", "redo", "v", 6, "find", "spell", "pilcrow", 4, "table", "v", "image", "chart", "textbox", 7, "pageBreak", "field", "v", "omega", "v", 4, "link", "footnote", "endnote", "bookmark", "crossRef", 6, "comment", "track", 5, "line", "diamond", "v", "shapes"]} />
      </ToolRow>

      <ToolRow>
        <Combo w={84} value="Contenu de tableau" label="Style de paragraphe" />
        <Gap $w={2} />
        <Tools items={["styleEdit", "styleNew", 3]} />
        <Combo w={92} value="Liberation Serif" label="Police" />
        <Gap $w={4} />
        <Combo w={30} value="12 pt" label="Taille" />
        <Gap $w={4} />
        <GlyphTool $kind="bold">G</GlyphTool>
        <GlyphTool $kind="italic">I</GlyphTool>
        <GlyphTool $kind="under">S</GlyphTool>
        <CaretButton aria-label="Plus d'options" />
        <GlyphTool $kind="strike">S</GlyphTool>
        <Gap $w={5} />
        <GlyphTool><span>x<sup>2</sup></span></GlyphTool>
        <GlyphTool><span>x<sub>2</sub></span></GlyphTool>
        <Tools items={[4, "clear", 4, "fontColor", "v", "highlight", "v", 4, "alignLeft*", "alignCenter", "alignRight", "justify", 6, "bullets", "v", "numbers", "v", "noList*", 6, "indent", "outdent", 3, "lineSpacing", "v", 3, "paraUp", "paraDown"]} />
      </ToolRow>

      <Workspace>
        <Canvas>
          <TabCorner width="6" height="6" viewBox="0 0 6 6" aria-hidden="true"><path d="M1 0v4h4" stroke="#e0e0e0" fill="none" strokeWidth="1.500" /></TabCorner>
          <Ruler />
          <Sheet>
            <Heading>Les adjectifs de couleur</Heading>
            <DocTable>
              <tbody>
                {rows.map((r, i) => (
                  <Row key={i} $h={r.h}>
                    <Cell>{r.cells[0]}</Cell>
                    <Cell>{r.cells[1]}</Cell>
                    <Cell>{r.cells[2]}</Cell>
                  </Row>
                ))}
              </tbody>
            </DocTable>
          </Sheet>
        </Canvas>
        <Scrollbar>
          <svg width="6" height="6" viewBox="0 0 6 6" aria-hidden="true"><path d="M1 4l2-2 2 2" stroke="#8a8a8a" fill="none" strokeWidth=".8" /></svg>
          <Thumb />
          <svg width="6" height="8" viewBox="0 0 6 8" aria-hidden="true"><path d="M1 3l2 2 2-2" stroke="#8a8a8a" fill="none" strokeWidth=".8" /></svg>
        </Scrollbar>
        <Splitter>
          <SplitHandle aria-label="Masquer le volet"><svg width="3" height="4" viewBox="0 0 3 4"><path d="M.5 0l2 2-2 2z" fill="#111" /></svg></SplitHandle>
        </Splitter>
        <SideBar>
          <SideButton $h={14} aria-label="Paramètres"><Svg name="hamburger" /></SideButton>
          {["properties", "styles", "gallery", "compass", "page", "inspector", "track"].map((n) => (
            <SideButton key={n} $h={17} aria-label={n}><Svg name={n} /></SideButton>
          ))}
        </SideBar>
      </Workspace>

      <ToolRow>
        <Tools items={["rowAbove", "rowBelow", "colBefore", "colAfter", 6, "delRow", "delCol", "delTable", 6, "selCell", "selTable", 5, "merge", "split", "splitTable", 4, "optimize", "v", 5, "vTop*", "vMid", "vBot", 5, "bucket", "v", "autoFormat", 4, "borders", "v", "borderStyle", "v", "borderColor", "v", 6, "currency", "percent", "decimal", "date", 5, "caption", "sort", 5, "lock", "unlock", 5, "sum", "fx", 5, "tableProps"]} />
      </ToolRow>

      <StatusBar>
        <StatusCell><svg width="6" height="6" viewBox="0 0 6 6" aria-hidden="true"><path d="M.5.5h5v5h-5zM2 .5v2h2v-2" stroke="#c4525d" fill="none" strokeWidth=".8" /></svg></StatusCell>
        <StatusCell $left>Page 8 de 8</StatusCell>
        <StatusCell $left>1 086 mots, 6 409 caractères</StatusCell>
        <StatusCell>Style de page par défaut</StatusCell>
        <StatusCell>Français (Canada)</StatusCell>
        <StatusCell />
        <StatusCell><svg width="9" height="7" viewBox="0 0 9 7" aria-hidden="true"><path d="M.5 2h4v3h-4z" stroke="#2f6f96" fill="none" strokeWidth=".8" /><path d="M6 .5h2M7 .5v6M6 6.500h2" stroke="#d0d0d0" strokeWidth=".7" /></svg></StatusCell>
        <StatusCell>Tableau9:A16</StatusCell>
        <StatusCell><svg width="30" height="7" viewBox="0 0 30 7" aria-hidden="true"><path d="M2.500 1h3v5h-3z" stroke={B} fill="none" strokeWidth=".8" /><path d="M9.500 1h3v5h-3zM14.500 1h3v5h-3zM21.500 1.500h3.500v4.500h-3.500zM25 1.500h3.500v4.500H25z" stroke="#c8c8c8" fill="none" strokeWidth=".8" /></svg></StatusCell>
        <StatusCell>
          <BareButton aria-label="Zoom arrière"><svg width="6" height="6" viewBox="0 0 6 6"><path d="M.5 3h5" stroke="#fff" /></svg></BareButton>
          <ZoomSlider type="range" aria-label="Zoom" min="0" max="100" defaultValue="59" />
          <BareButton aria-label="Zoom avant"><svg width="6" height="6" viewBox="0 0 6 6"><path d="M.5 3h5M3 .5v5" stroke="#fff" /></svg></BareButton>
        </StatusCell>
        <StatusCell>200 %</StatusCell>
      </StatusBar>

      <TaskBar>
        <StartButton aria-label="Démarrer"><svg width="10" height="10" viewBox="0 0 10 10"><path d="M1 2l3.500-.5v3.200H1zM5 1.400L9 .8v3.900H5zM1 5.200h3.500v3.200L1 8zM5 5.200h4v3.900L5 8.500z" fill="#fff" /></svg></StartButton>
        <Search>
          <svg width="8" height="8" viewBox="0 0 8 8" aria-hidden="true"><circle cx="4.800" cy="3.200" r="2.500" stroke="#e2e6ea" fill="none" strokeWidth=".8" /><path d="M3 5L.5 7.500" stroke="#e2e6ea" strokeWidth=".8" /></svg>
          <input aria-label="Rechercher" placeholder="Taper ici pour rechercher" />
          <svg width="36" height="20" viewBox="-2 0 36 20" aria-hidden="true">
            <path d="M-4 20C4 14 24 14 34 18v2z" fill="#d8b48a" />
            <path d="M4 8l11-3 3 9-11 3z" fill="#f4f1e6" />
            <path d="M5 8l11-3 .5 1.800L5.500 10z" fill="#63b37a" />
            <path d="M18 3l2 1.500L12 13l-2 .5z" fill="#e8a33d" />
            <path d="M24 14V7a4.500 5 0 0 1 9 0v7z" fill="#1f6ae0" />
            <circle cx="28.500" cy="5" r="3.500" fill="#3d8bf5" />
            <path d="M22 13h12v3H22z" fill="#1750b5" />
          </svg>
        </Search>
        <Apps>
          {appIcons.map((a) => (
            <TaskButton key={a.name} $open={a.open} $active={a.active} aria-label={a.name}>
              <svg width="12" height="12" viewBox="0 0 12 12">{a.art}</svg>
            </TaskButton>
          ))}
        </Apps>
        <Tray>
          <Weather>
            <svg width="11" height="11" viewBox="0 0 11 11" aria-hidden="true"><defs><linearGradient id="sun" x1="0" y1="0" x2="1" y2="1"><stop offset="0" stopColor="#fbb62f" /><stop offset="1" stopColor="#f07a1a" /></linearGradient></defs><circle cx="5.500" cy="5.500" r="5" fill="url(#sun)" /></svg>
            <span>27°C&nbsp; Ensoleillé</span>
          </Weather>
          {trayIcons.map(([name, art]) => (
            <TrayIcon key={name} aria-label={name}><svg width="9" height="9" viewBox="0 0 9 9" stroke="#f0f0f0" fill="none" strokeWidth=".8">{art}</svg></TrayIcon>
          ))}
          <Lang>FRA</Lang>
          <Clock>18:48<br />2023-10-03</Clock>
          <Notify aria-label="Notifications"><svg width="14" height="14" viewBox="0 0 14 14"><path d="M1 2h9v7H5l-2 2V9H1z" fill="#f2f2f2" /><path d="M3 4h5M3 6h5" stroke="#7f8c96" strokeWidth=".7" /><circle cx="9.500" cy="9.500" r="4" fill="#2673b8" stroke="#8fb8dc" strokeWidth=".5" /><text x="9.500" y="11.500" fontSize="6" fill="#fff" textAnchor="middle" fontFamily="Roboto">7</text></svg></Notify>
          <DesktopEdge />
        </Tray>
      </TaskBar>
    </Shell>
  );
}
